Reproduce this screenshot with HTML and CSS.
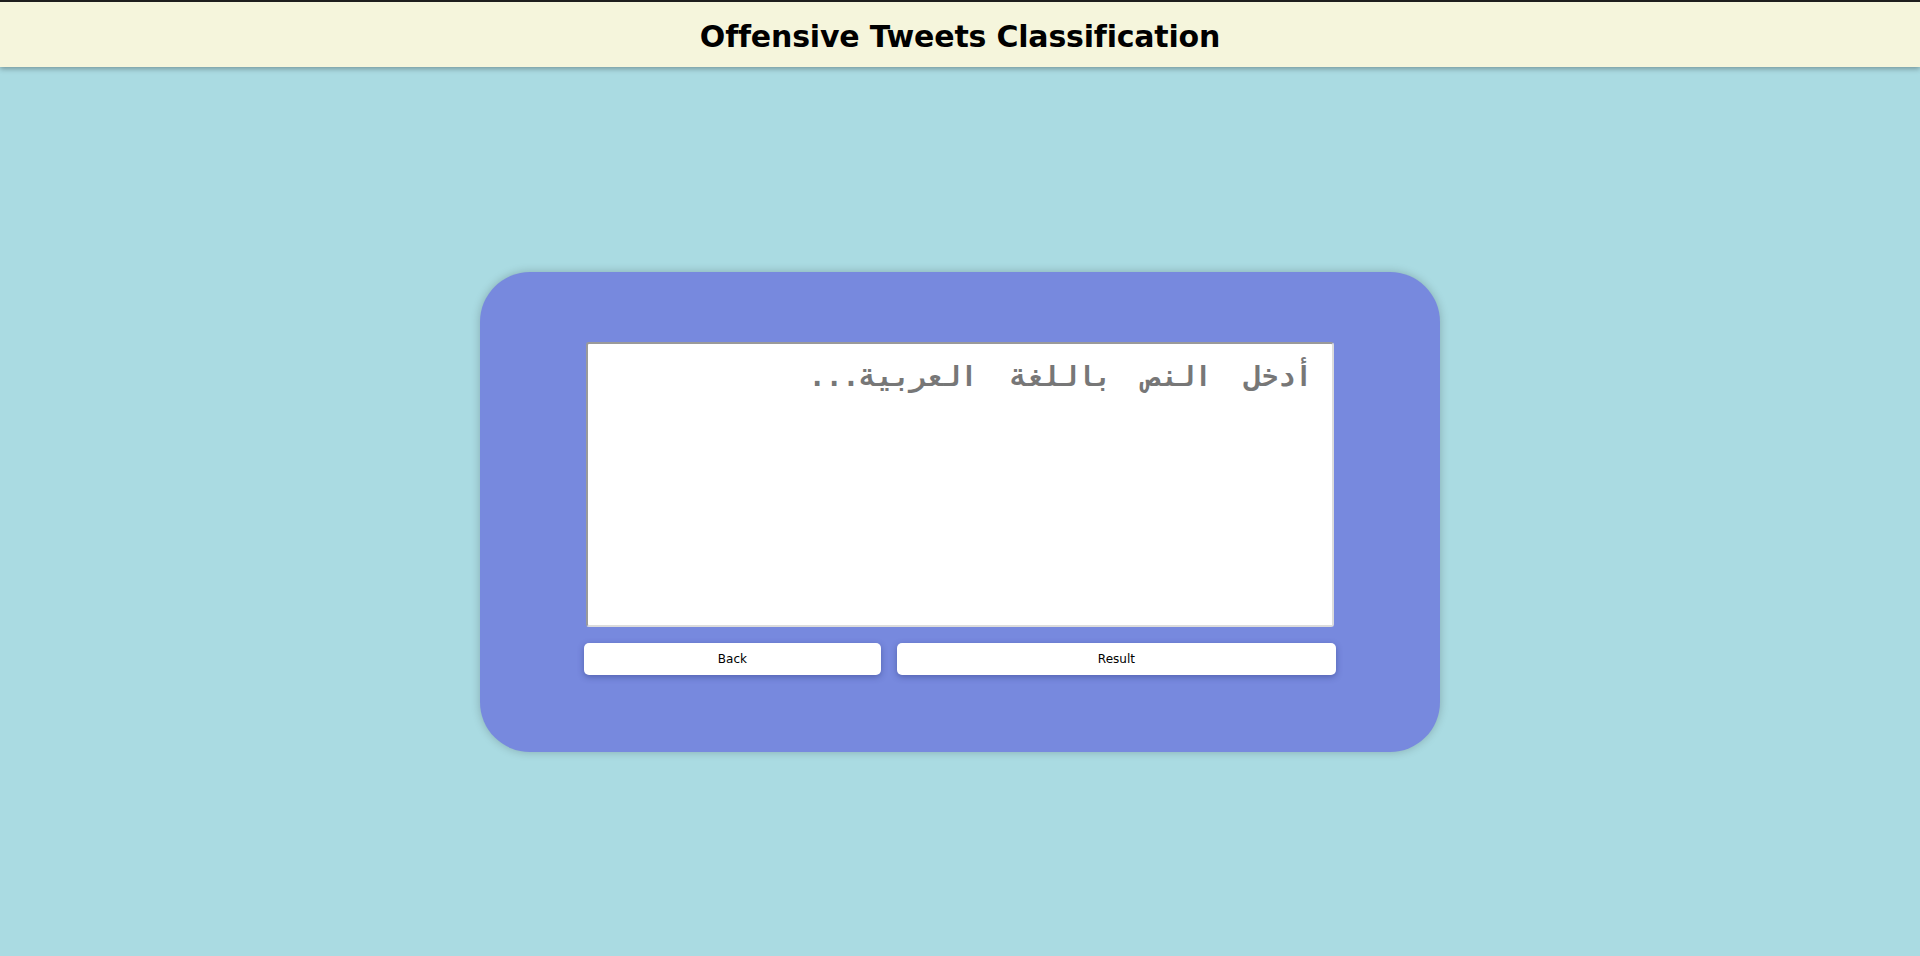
FILE: index.html
```html
<!DOCTYPE html>
<html lang="en">
<head>
<meta charset="utf-8">
<title>Offensive Tweets Classification</title>
<link rel="stylesheet" href="styles.css">
</head>
<body>
<header class="topbar">
  <h1 class="title">Offensive Tweets Classification</h1>
</header>
<main class="stage">
  <section class="card">
    <textarea class="tweet-input" dir="rtl" placeholder="أدخل النص باللغة العربية..." autofocus></textarea>
    <div class="actions">
      <button class="btn btn-back" type="button">Back</button>
      <button class="btn btn-result" type="button">Result</button>
    </div>
  </section>
</main>
</body>
</html>
```

FILE: styles.css
```css
* { box-sizing: border-box; }

html, body {
  margin: 0;
  padding: 0;
  height: 100%;
}

body {
  background: #aadbe2;
  display: flex;
  flex-direction: column;
  font-family: "DejaVu Sans", sans-serif;
}

.topbar {
  height: 67px;
  flex: 0 0 67px;
  background: #f5f5dc;
  border-top: 2px solid #1e1e1e;
  box-shadow: 0 2px 5px rgba(0, 0, 0, 0.3);
  display: flex;
  align-items: center;
  justify-content: center;
  position: relative;
  z-index: 1;
}

.title {
  margin: 0;
  font-family: "DejaVu Sans", sans-serif;
  font-weight: bold;
  font-size: 30px;
  color: #000;
  letter-spacing: -0.2px;
  padding-top: 4px;
}

.stage {
  flex: 1;
  display: flex;
  align-items: center;
  justify-content: center;
}

.card {
  width: 960px;
  height: 480px;
  background: #7789de;
  border-radius: 50px;
  box-shadow: 0 0 10px rgba(0, 0, 0, 0.22);
  padding: 70px 104px 0;
  display: flex;
  flex-direction: column;
  align-items: center;
  gap: 16px;
}

.tweet-input {
  width: 748px;
  height: 285px;
  resize: none;
  border: 2px solid;
  border-color: #9a9a9a #dcdcdc #dcdcdc #9a9a9a;
  border-radius: 3px;
  background: #fff;
  padding: 16px 20px 12px;
  font-family: "DejaVu Sans Mono", monospace;
  font-size: 28px;
  font-weight: bold;
  word-spacing: 16px;
  color: #333;
  outline: none;
}

.tweet-input::placeholder {
  color: #777;
}

.actions {
  width: 752px;
  display: flex;
  gap: 16px;
}

.btn {
  height: 32px;
  border: none;
  border-radius: 5px;
  background: #fff;
  color: #000;
  font-family: "DejaVu Sans", sans-serif;
  font-size: 12px;
  box-shadow: 0 2px 6px rgba(40, 50, 120, 0.45);
  cursor: pointer;
}

.btn-back { flex: 2; }
.btn-result { flex: 3; }
```
